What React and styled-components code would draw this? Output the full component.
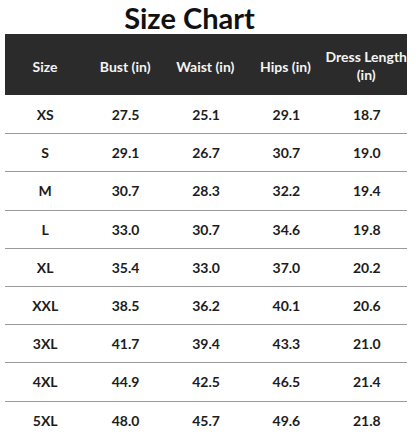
import React from "react";
import styled, { createGlobalStyle } from "styled-components";

const Global = createGlobalStyle`
  html, body { margin: 0; padding: 0; background: #fff; }
  body { width: 416px; height: 438px; overflow: hidden; font-family: Lato, "Open Sans", sans-serif; }
`;

const Page = styled.div`
  width: 416px;
  display: flex;
  flex-direction: column;
  align-items: center;
`;

const Title = styled.h1`
  margin: 0;
  height: 34px;
  line-height: 35px;
  font-size: 29px;
  font-weight: 700;
  color: #111;
  padding-right: 37px;
`;

const Table = styled.div`
  width: 402px;
  margin-right: 4px;
  display: flex;
  flex-direction: column;
`;

const HeaderRow = styled.div`
  display: grid;
  grid-template-columns: repeat(5, 1fr);
  height: 61px;
  background: #2b2b2b;
  align-items: center;
`;

const HeadCell = styled.div`
  color: #f4f4f4;
  font-size: 14px;
  font-weight: 700;
  text-align: center;
  line-height: 18px;
  white-space: nowrap;
  padding-top: ${(p) => (p.$pad ? "3px" : "5px")};
`;

const Row = styled.div`
  display: grid;
  grid-template-columns: repeat(5, 1fr);
  height: 38.2px;
  align-items: center;
  border-top: ${(p) => (p.$first ? "none" : "1.5px solid #9a9a9a")};
  box-sizing: border-box;
`;

const Cell = styled.div`
  color: #1c1c1c;
  font-size: 14px;
  font-weight: 700;
  text-align: center;
`;

const headers = ["Size", "Bust (in)", "Waist (in)", "Hips (in)"];

const rows = [
  ["XS", "27.5", "25.1", "29.1", "18.7"],
  ["S", "29.1", "26.7", "30.7", "19.0"],
  ["M", "30.7", "28.3", "32.2", "19.4"],
  ["L", "33.0", "30.7", "34.6", "19.8"],
  ["XL", "35.4", "33.0", "37.0", "20.2"],
  ["XXL", "38.5", "36.2", "40.1", "20.6"],
  ["3XL", "41.7", "39.4", "43.3", "21.0"],
  ["4XL", "44.9", "42.5", "46.5", "21.4"],
  ["5XL", "48.0", "45.7", "49.6", "21.8"],
];

export default function App() {
  return (
    <Page>
      <Global />
      <Title>Size Chart</Title>
      <Table>
        <HeaderRow>
          {headers.map((h) => (
            <HeadCell key={h}>{h}</HeadCell>
          ))}
          <HeadCell $pad>
            Dress Length
            <br />
            (in)
          </HeadCell>
        </HeaderRow>
        {rows.map((r, i) => (
          <Row key={r[0]} $first={i === 0}>
            {r.map((c, j) => (
              <Cell key={j}>{c}</Cell>
            ))}
          </Row>
        ))}
      </Table>
    </Page>
  );
}
